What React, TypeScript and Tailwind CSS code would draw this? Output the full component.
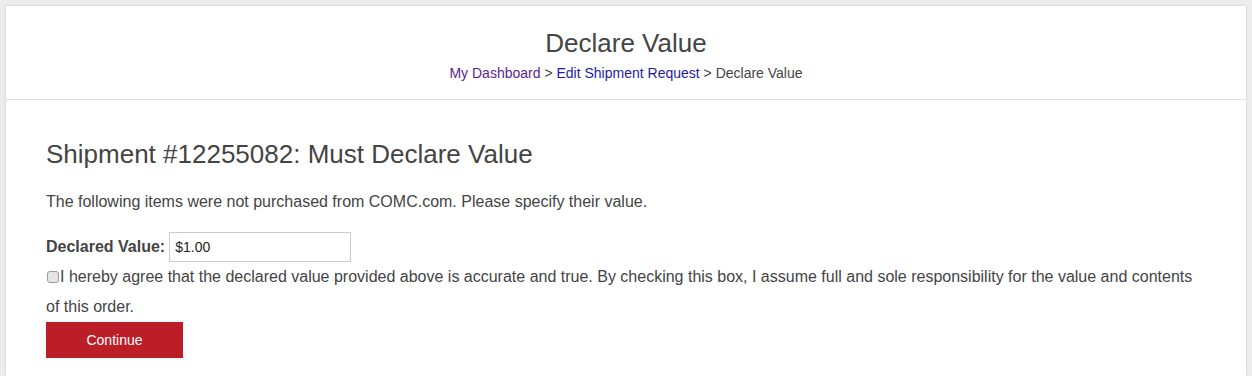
import React, { useState } from "react";

const DeclareValue: React.FC = () => {
  const [value, setValue] = useState("$1.00");
  const [agreed, setAgreed] = useState(false);

  return (
    <div className="min-h-[376px] bg-[#ececec] px-[6px] pt-[6px] font-['Liberation_Sans',Arial,sans-serif] text-[#444]">
      <div className="min-h-[370px] bg-white shadow-[0_0_2px_rgba(0,0,0,0.18)]">
        <div className="border-b border-[#dddddd] pb-[16px] pt-[23px] text-center">
          <h1 className="text-[26px] leading-[28px] text-[#444]">Declare Value</h1>
          <div className="mt-[6px] text-[14px] leading-[20px]">
            <a href="#" className="text-[#5b1f8f]">
              My Dashboard
            </a>{" "}
            &gt;{" "}
            <a href="#" className="text-[#1c1ca3]">
              Edit Shipment Request
            </a>{" "}
            &gt; Declare Value
          </div>
        </div>

        <div className="px-[40px] pb-[18px]">
          <h2 className="mt-[39px] text-[26px] leading-[30px]">
            Shipment #12255082: Must Declare Value
          </h2>
          <p className="mt-[22px] text-[16px] leading-[21px]">
            The following items were not purchased from COMC.com. Please specify their value.
          </p>

          <div className="mt-[20px] flex h-[30px] items-center">
            <label className="text-[16px] font-bold leading-[20px]">Declared Value:</label>
            <input
              type="text"
              value={value}
              onChange={(e) => setValue(e.target.value)}
              className="ml-[4px] h-[30px] w-[182px] border border-[#cccccc] px-[5px] text-[14px] text-[#222] outline-none"
            />
          </div>

          <label className="block text-[16px] leading-[30px]">
            <input
              type="checkbox"
              checked={agreed}
              onChange={(e) => setAgreed(e.target.checked)}
              className="relative top-[1px] ml-[1px] mr-[1px] inline-block h-[12px] w-[12px] appearance-none rounded-[3px] border border-[#9a9a9a] bg-[#e4e4e4] align-baseline"
            />
            I hereby agree that the declared value provided above is accurate and true. By checking this
            box, I assume full and sole responsibility for the value and contents of this order.
          </label>

          <button
            type="button"
            className="flex h-[36px] w-[137px] items-center justify-center bg-[#bb1e27] text-[14px] text-white"
          >
            Continue
          </button>
        </div>
      </div>
    </div>
  );
};

export default function App() {
  return <DeclareValue />;
}
